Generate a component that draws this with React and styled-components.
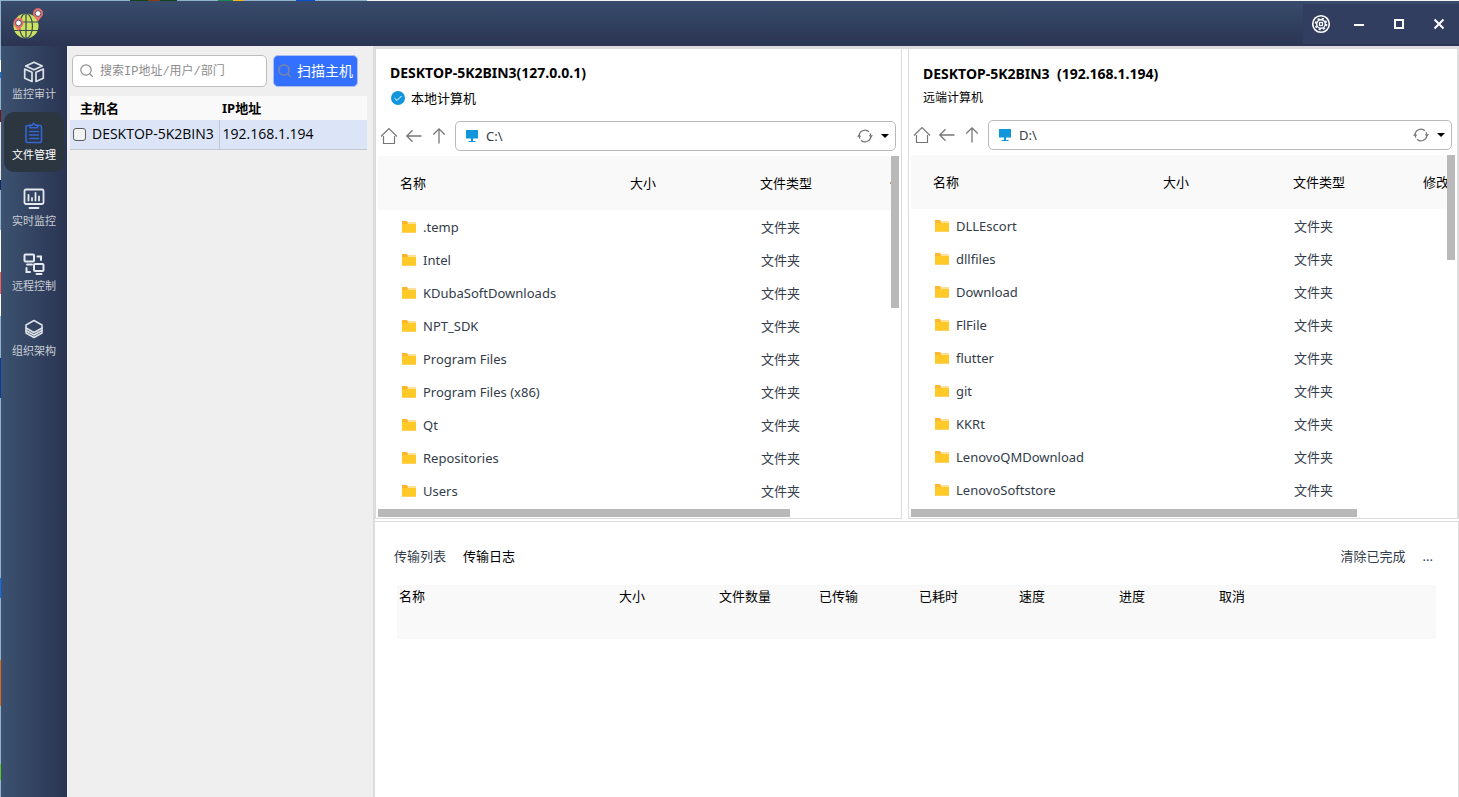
import React, { useState } from "react";
import styled, { createGlobalStyle } from "styled-components";

const latin = `"Noto Sans", "Noto Sans CJK SC", sans-serif`;

const navTop = [
  { key: "audit", label: "监控审计", Icon: CubeIcon },
  { key: "files", label: "文件管理", Icon: ClipboardIcon },
];

const navBottom = [
  { key: "live", label: "实时监控", Icon: MonitorIcon },
  { key: "remote", label: "远程控制", Icon: RemoteIcon },
  { key: "org", label: "组织架构", Icon: LayersIcon },
];

const hosts = [{ name: "DESKTOP-5K2BIN3", ip: "192.168.1.194" }];

const localFiles = [
  ".temp",
  "Intel",
  "KDubaSoftDownloads",
  "NPT_SDK",
  "Program Files",
  "Program Files (x86)",
  "Qt",
  "Repositories",
  "Users",
];

const remoteFiles = [
  "DLLEscort",
  "dllfiles",
  "Download",
  "FlFile",
  "flutter",
  "git",
  "KKRt",
  "LenovoQMDownload",
  "LenovoSoftstore",
];

const transferColumns = ["名称", "大小", "文件数量", "已传输", "已耗时", "速度", "进度", "取消"];

export default function App() {
  const [page, setPage] = useState("files");
  const [tab, setTab] = useState("log");

  const renderNav = ({ key, label, Icon }) => (
    <NavItem key={key} type="button" $active={page === key} onClick={() => setPage(key)}>
      <Icon />
      <span>{label}</span>
    </NavItem>
  );

  return (
    <>
      <GlobalStyle />
      <Desktop>
        <Window>
          <TitleBar>
            <LogoIcon />
            <WindowButtons>
              <button type="button" aria-label="设置"><GearIcon /></button>
              <button type="button" aria-label="最小化">
                <svg width="12" height="12"><path d="M1 7h10" stroke="#fff" strokeWidth="2" /></svg>
              </button>
              <button type="button" aria-label="最大化">
                <svg width="12" height="12"><path d="M2 2h8v8H2z" stroke="#fff" strokeWidth="2" fill="none" /></svg>
              </button>
              <button type="button" aria-label="关闭">
                <svg width="12" height="12"><path d="M1.5 1.5l9 9M10.5 1.5l-9 9" stroke="#fff" strokeWidth="2" /></svg>
              </button>
            </WindowButtons>
          </TitleBar>
          <Body>
            <Sidebar>
              <NavGroup $gap={1}>{navTop.map(renderNav)}</NavGroup>
              <NavGroup $gap={5}>{navBottom.map(renderNav)}</NavGroup>
            </Sidebar>
            <HostPanel>
              <SearchRow>
                <SearchBox>
                  <SearchIcon />
                  <input type="text" aria-label="搜索" placeholder="搜索IP地址/用户/部门" />
                </SearchBox>
                <ScanButton type="button">
                  <SearchIcon />
                  扫描主机
                </ScanButton>
              </SearchRow>
              <HostTable>
                <thead>
                  <tr>
                    <th>主机名</th>
                    <th>IP地址</th>
                  </tr>
                </thead>
                <tbody>
                  {hosts.map((host) => (
                    <tr key={host.ip}>
                      <td>
                        <label>
                          <input type="checkbox" />
                          {host.name}
                        </label>
                      </td>
                      <td>{host.ip}</td>
                    </tr>
                  ))}
                </tbody>
              </HostTable>
            </HostPanel>
            <Main>
              <Panes>
                <FilePane
                  title="DESKTOP-5K2BIN3(127.0.0.1)"
                  subtitle="本地计算机"
                  path="C:\"
                  files={localFiles}
                  thumbX={79}
                  thumbY={42}
                  local
                />
                <FilePane
                  title="DESKTOP-5K2BIN3  (192.168.1.194)"
                  subtitle="远端计算机"
                  path="D:\"
                  files={remoteFiles}
                  thumbX={82}
                  thumbY={29}
                />
              </Panes>
              <Transfers>
                <TransferBar>
                  <TabButton type="button" $active={tab === "list"} onClick={() => setTab("list")}>
                    传输列表
                  </TabButton>
                  <TabButton type="button" $active={tab === "log"} onClick={() => setTab("log")}>
                    传输日志
                  </TabButton>
                  <Spacer />
                  <TabButton type="button">清除已完成</TabButton>
                  <TabButton type="button">...</TabButton>
                </TransferBar>
                <TransferTable>
                  <thead>
                    <tr>
                      {transferColumns.map((name) => (
                        <th key={name}>{name}</th>
                      ))}
                    </tr>
                  </thead>
                </TransferTable>
              </Transfers>
            </Main>
          </Body>
        </Window>
      </Desktop>
    </>
  );
}

function FilePane({ title, subtitle, path, files, thumbX, thumbY, local }) {
  const [value, setValue] = useState(path);

  return (
    <Pane $local={local}>
      <PaneTitle>{title}</PaneTitle>
      <PaneSubtitle $local={local}>
        {local && <CheckIcon />}
        {subtitle}
      </PaneSubtitle>
      <PathRow>
        <IconButton type="button" aria-label="主目录"><HomeIcon /></IconButton>
        <IconButton type="button" aria-label="后退"><BackIcon /></IconButton>
        <IconButton type="button" aria-label="上一级"><UpIcon /></IconButton>
        <PathBox>
          <ScreenIcon />
          <input aria-label="路径" value={value} onChange={(e) => setValue(e.target.value)} />
          <IconButton type="button" aria-label="刷新"><RefreshIcon /></IconButton>
          <IconButton type="button" aria-label="历史路径">
            <svg width="10" height="6"><path d="M1 1h8L5 5z" fill="#000" /></svg>
          </IconButton>
        </PathBox>
      </PathRow>
      <Scroller>
        <Viewport>
          <FileTable>
            <thead>
              <tr>
                <th>名称</th>
                <th>大小</th>
                <th>文件类型</th>
                <th>修改时间</th>
              </tr>
            </thead>
            <tbody>
              {files.map((name) => (
                <tr key={name}>
                  <td>
                    <FileName>
                      <FolderIcon />
                      {name}
                    </FileName>
                  </td>
                  <td />
                  <td>文件夹</td>
                  <td />
                </tr>
              ))}
            </tbody>
          </FileTable>
        </Viewport>
        <ThumbY style={{ height: `${thumbY}%` }} />
        <ThumbX style={{ width: `${thumbX}%` }} />
      </Scroller>
    </Pane>
  );
}

function LogoIcon() {
  return (
    <svg width="34" height="34" viewBox="0 0 34 34" fill="none">
      <circle cx="15" cy="19" r="12.5" fill="#cbe35c" />
      <g stroke="#39475f" strokeWidth="1.2">
        <path d="M15 6.5v25M3 15h24M3 23.5h24" />
        <ellipse cx="15" cy="19" rx="6.5" ry="12.5" />
      </g>
      <path d="M27 14.5c-3-4-5-5.5-5-8.2a5 5 0 0 1 10 0c0 2.7-2 4.2-5 8.2z" fill="#f2716b" />
      <circle cx="27" cy="6.5" r="2.9" fill="#fff" stroke="#4a5468" />
      <path d="M7.5 24c-3-4-5-5.5-5-8.2a5 5 0 0 1 10 0c0 2.700-2 4.2-5 8.2z" fill="#f2716b" />
      <circle cx="7.5" cy="16" r="2.9" fill="#fff" stroke="#4a5468" />
    </svg>
  );
}

function GearIcon() {
  return (
    <svg width="20" height="20" viewBox="0 0 20 20" fill="none" stroke="#fff">
      <circle cx="10" cy="10" r="8.3" strokeWidth="1.6" />
      <circle cx="10" cy="10" r="4.3" strokeWidth="1.4" />
      <circle cx="10" cy="10" r="5.5" strokeWidth="1.6" strokeDasharray="2.16 2.16" />
      <rect x="8.5" y="8.5" width="3" height="3" strokeWidth="1.2" />
    </svg>
  );
}

function CubeIcon() {
  return (
    <svg width="22" height="22" viewBox="0 0 22 22" fill="none" stroke="#dfe3e8" strokeWidth="1.7" strokeLinejoin="round">
      <path d="M11 1.2l8.300 3.800L11 8.800 2.700 5z" />
      <path d="M1.700 8l7.300 3.200v9.300l-7.300-3.300z" />
      <path d="M20.300 8L13 11.200v9.300l7.300-3.300z" />
    </svg>
  );
}

function ClipboardIcon() {
  return (
    <svg width="22" height="22" viewBox="0 0 22 22" fill="none" stroke="#3566d6" strokeWidth="1.6" strokeLinecap="round">
      <path d="M7 3.500H4.500a1.500 1.500 0 0 0-1.500 1.500v14a1.500 1.500 0 0 0 1.500 1.500h12.500a1.500 1.500 0 0 0 1.500-1.500V5a1.500 1.500 0 0 0-1.500-1.500H14.500" />
      <path d="M7 3.200h2l1.700-1.700 1.700 1.700h2.100v2.500H7z" />
      <path d="M6.500 9.500h9M6.500 13h9M6.500 16.500h9" />
    </svg>
  );
}

function MonitorIcon() {
  return (
    <svg width="22" height="22" viewBox="0 0 22 22" fill="none" stroke="#e6e9ed" strokeWidth="1.8" strokeLinecap="round">
      <rect x="1.500" y="1.500" width="19" height="14.500" rx="1.500" />
      <path d="M5.500 7v5.500M9 10v2.500M12.500 5v7.500M16 8.500v4M6.500 20h9" />
    </svg>
  );
}

function RemoteIcon() {
  return (
    <svg width="22" height="22" viewBox="0 0 22 22" fill="none" stroke="#e6e9ed" strokeWidth="2" strokeLinecap="round">
      <rect x="1.500" y="1.500" width="9.500" height="7" rx="1" />
      <rect x="11" y="11" width="9.500" height="7" rx="1" />
      <path d="M4 11.500h5M13.500 21h5" />
      <path d="M14.500 3.500h3.500v3.500M3.500 15v4h3.500" />
    </svg>
  );
}

function LayersIcon() {
  return (
    <svg width="22" height="22" viewBox="0 0 22 22" fill="none" stroke="#dfe3e8" strokeWidth="1.5" strokeLinejoin="round" strokeLinecap="round">
      <path d="M11 2.500l8 4.500v3l-8 4.500L3 10V7z" />
      <path d="M3 10v2.500l8 4.500 8-4.500V10" />
      <path d="M3 12.500V15l8 4.500 8-4.500v-2.500" />
    </svg>
  );
}

function SearchIcon() {
  return (
    <svg width="14" height="14" viewBox="0 0 14 14" fill="none" stroke="#8c8c8c" strokeWidth="1.2">
      <circle cx="6" cy="6" r="5.200" />
      <path d="M9.800 9.800L12.800 12.800" />
    </svg>
  );
}

function CheckIcon() {
  return (
    <svg width="14" height="14" viewBox="0 0 14 14" fill="none">
      <circle cx="7" cy="7" r="7" fill="#1296db" />
      <path d="M3.500 7.200l2.500 2.300L10.500 5" stroke="#fff" strokeWidth="1" />
    </svg>
  );
}

function HomeIcon() {
  return (
    <svg width="18" height="18" viewBox="0 0 18 18" fill="none" stroke="#777" strokeWidth="1.2">
      <path d="M1 9.500L9 1.500l8 8" />
      <path d="M3.500 9v7.500h11V9" />
    </svg>
  );
}

function BackIcon() {
  return (
    <svg width="18" height="18" viewBox="0 0 18 18" fill="none" stroke="#777" strokeWidth="1.3">
      <path d="M16.500 9H2M7.500 3.300L1.800 9l5.700 5.700" />
    </svg>
  );
}

function UpIcon() {
  return (
    <svg width="18" height="18" viewBox="0 0 18 18" fill="none" stroke="#777" strokeWidth="1.3">
      <path d="M9 16.500V2M3.300 7.500L9 1.800l5.700 5.700" />
    </svg>
  );
}

function ScreenIcon() {
  return (
    <svg width="14" height="14" viewBox="0 0 14 14" fill="#1296db">
      <path d="M1 1h12v8.500H1zM6 9.500h2V12h2.500v1h-7v-1H6z" />
    </svg>
  );
}

function RefreshIcon() {
  return (
    <svg width="16" height="16" viewBox="0 0 16 16" fill="none" stroke="#777" strokeWidth="1.2">
      <path d="M2.200 8.500A5.800 5.800 0 0 1 12 3.800" />
      <path d="M13.800 7.500A5.800 5.800 0 0 1 4 12.200" />
      <path d="M13 5.200a5.800 5.800 0 0 1 .8 2.300M3 10.800a5.800 5.800 0 0 1-.8-2.300" />
      <path d="M0 8.800l2.200-2.800 2 2.800zM11.800 7.200l2 2.800 2.200-2.800z" fill="#777" stroke="none" />
    </svg>
  );
}

function FolderIcon() {
  return (
    <svg width="14" height="12" viewBox="0 0 14 12">
      <path d="M0 0h5l1.200 1.500H14V11.500H0z" fill="#ffb62e" />
      <path d="M5.500 1.500H14V3H6z" fill="#ffe39a" />
      <path d="M0 3h14v8.500H0z" fill="#ffca28" />
    </svg>
  );
}

const GlobalStyle = createGlobalStyle`
  * {
    box-sizing: border-box;
  }
  body {
    margin: 0;
    font-family: ${latin};
    font-size: 13px;
    line-height: 20px;
    color: #000;
  }
  button, input {
    font: inherit;
    color: inherit;
    padding: 0;
    border: none;
    outline: none;
    background: none;
  }
  button {
    cursor: pointer;
  }
  svg {
    display: block;
    flex-shrink: 0;
  }
`;

/* the wallpaper shows as a thin line above and left of the window */
const Desktop = styled.div`
  display: flex;
  min-height: 100vh;
  padding: 1px 0 0 1px;
  background:
    linear-gradient(
      to right,
      #8fb3cb 130px, #12421c 130px 148px, #8a3a14 148px 160px, #12421c 160px 177px,
      #8fb3cb 177px 218px, #1f8a4c 218px 233px, #f2b71c 233px 244px, #8fb3cb 244px 296px,
      #0a50d0 296px 315px, #8fb3cb 315px 367px, #f3f5f3 367px
    ) top / 100% 1px no-repeat,
    linear-gradient(
      #8fb3cb 60px, #fff 60px 72px, #0a7be0 72px 78px, #8fb3cb 78px 110px, #7a1018 110px 122px,
      #e8e4d8 122px 180px, #0a2a6a 180px 190px, #8fb3cb 190px 230px, #fff 230px 272px,
      #ff5a5a 272px 294px, #fff 294px 316px, #8fb3cb 316px 358px, #0a3a9a 358px 398px,
      #8fb3cb 398px 578px, #0a6ff0 578px 598px, #8fb3cb 598px 660px, #e06a10 660px 706px,
      #8fb3cb 706px 764px, #5ac81e 764px 780px, #8fb3cb 780px
    );
`;

const Window = styled.div`
  display: flex;
  flex: 1;
  min-width: 0;
  flex-direction: column;
`;

const TitleBar = styled.header`
  display: flex;
  align-items: center;
  justify-content: space-between;
  height: 45px;
  padding-left: 10px;
  background: linear-gradient(#384b6b, #2b3553);
`;

const WindowButtons = styled.div`
  display: flex;
  height: 40px;
  background: #323e5f;
  button {
    display: flex;
    align-items: center;
    justify-content: center;
    width: 40px;
    &:first-child {
      width: 36px;
    }
  }
`;

const Body = styled.div`
  display: flex;
  flex: 1;
`;

const Sidebar = styled.nav`
  display: flex;
  flex-direction: column;
  gap: 6px;
  width: 66px;
  padding: 5px 3px;
  background: linear-gradient(to right, #3c5270, #2a3453);
`;

const NavGroup = styled.div`
  display: flex;
  flex-direction: column;
  gap: ${(props) => props.$gap}px;
`;

const NavItem = styled.button`
  display: flex;
  flex-direction: column;
  align-items: center;
  justify-content: center;
  gap: 3px;
  height: 60px;
  border-radius: 10px;
  font-size: 11px;
  line-height: 16px;
  color: ${(props) => (props.$active ? "#fff" : "#c9ced4")};
  background: ${(props) => (props.$active ? "#2b3641" : "transparent")};
`;

const HostPanel = styled.aside`
  width: 306px;
  padding: 9px 6px 0 3px;
  background: #efefef;
`;

const SearchRow = styled.div`
  display: flex;
  gap: 6px;
  padding: 0 9px 9px 2px;
`;

const SearchBox = styled.label`
  display: flex;
  flex: 1;
  align-items: center;
  gap: 6px;
  height: 32px;
  padding: 0 7px;
  border: 1px solid #bdbdbd;
  border-radius: 5px;
  background: #fff;
  input {
    flex: 1;
    min-width: 0;
    padding-top: 2px;
    font-family: "Liberation Mono", "Noto Sans CJK SC", monospace;
    font-size: 12px;
    &::placeholder {
      color: #8c8c8c;
    }
  }
`;

const ScanButton = styled.button`
  display: flex;
  align-items: center;
  justify-content: center;
  gap: 5px;
  width: 85px;
  border: 1px solid #a9bdf0;
  border-radius: 5px;
  font-size: 14px;
  color: #fff;
  background: #3370ff;
`;

const HostTable = styled.table`
  width: 100%;
  border-collapse: collapse;
  table-layout: fixed;
  text-align: left;
  th {
    height: 24px;
    padding: 0 0 0 3px;
    background: #f9f9f9;
    &:first-child {
      width: 149px;
      padding-left: 10px;
    }
  }
  td {
    height: 29px;
    padding: 0 0 0 3px;
    border-bottom: 1px solid #c3c6cc;
    font-family: "Open Sans", "Noto Sans CJK SC", sans-serif;
    font-size: 14px;
    background: #dce5f8;
    white-space: nowrap;
    &:first-child {
      border-right: 1px solid #c3c6cc;
    }
  }
  label {
    display: flex;
    align-items: center;
    gap: 6px;
  }
  input {
    appearance: none;
    width: 13px;
    height: 13px;
    margin: 0;
    border: 1px solid #5c5c5c;
    border-radius: 3px;
    background: #f3f3f3;
    &:checked {
      background: #3370ff;
    }
  }
`;

const Main = styled.main`
  display: flex;
  flex: 1;
  flex-direction: column;
  min-width: 0;
  border-left: 2px solid #dcdcdc;
  background: #fff;
`;

const Panes = styled.div`
  display: grid;
  grid-template-columns: 527fr 551fr;
  gap: 6px;
  border-top: 3px solid #dcdcdc;
`;

const Pane = styled.section`
  display: flex;
  flex-direction: column;
  min-width: 0;
  padding: ${(props) => (props.$local ? "14px 2px 1px 2px" : "15px 2px 1px 2px")};
  border: 1px solid #dcdcdc;
  border-top: none;
  border-right-width: ${(props) => (props.$local ? 1 : 2)}px;
`;

const PaneTitle = styled.h2`
  margin: 0;
  padding-left: 12px;
  font-size: 14px;
  line-height: 20px;
  white-space: pre;
`;

const PaneSubtitle = styled.div`
  display: flex;
  align-items: center;
  gap: 6px;
  padding: ${(props) => (props.$local ? "5px 13px 13px" : "4px 12px 12px")};
  font-size: ${(props) => (props.$local ? 13 : 12)}px;
`;

const PathRow = styled.div`
  display: flex;
  align-items: center;
  gap: 7px;
  padding: 0 3px 5px 2px;
`;

const IconButton = styled.button`
  display: flex;
  align-items: center;
  justify-content: center;
`;

const PathBox = styled.div`
  display: flex;
  flex: 1;
  align-items: center;
  gap: 7px;
  min-width: 0;
  height: 30px;
  padding: 0 5px 0 9px;
  border: 1px solid #b9b9b9;
  border-radius: 5px;
  color: #333c4a;
  input {
    flex: 1;
    min-width: 0;
  }
`;

const Scroller = styled.div`
  position: relative;
  flex: 1;
  padding: 0 8px 10px 0;
`;

const Viewport = styled.div`
  overflow: hidden;
`;

const ThumbY = styled.div`
  position: absolute;
  top: 0;
  right: 0;
  width: 8px;
  background: #b9b9b9;
`;

const ThumbX = styled.div`
  position: absolute;
  bottom: 0;
  left: 0;
  height: 8px;
  background: #b9b9b9;
`;

const FileTable = styled.table`
  width: 660px;
  border-collapse: collapse;
  table-layout: fixed;
  text-align: left;
  th {
    width: 130px;
    height: 54px;
    padding: 0;
    font-weight: 400;
    background: #f9f9f9;
    &:first-child {
      width: 252px;
      padding-left: 22px;
    }
    &:last-child {
      width: auto;
    }
  }
  td {
    height: 33px;
    padding: 0 0 0 1px;
    color: #333c4a;
    &:first-child {
      padding-left: 24px;
    }
  }
`;

const FileName = styled.div`
  display: flex;
  align-items: center;
  gap: 7px;
`;

const Transfers = styled.section`
  flex: 1;
  margin-top: 2px;
  padding: 24px 22px 0;
  border-top: 1px solid #dcdcdc;
  border-right: 1px solid #dcdcdc;
`;

const TransferBar = styled.div`
  display: flex;
  gap: 17px;
  padding: 0 3px 19px 0;
  margin-left: -3px;
`;

const TabButton = styled.button`
  color: ${(props) => (props.$active ? "#000" : "#333c4a")};
`;

const Spacer = styled.div`
  flex: 1;
`;

const TransferTable = styled.table`
  width: 100%;
  border-collapse: collapse;
  table-layout: fixed;
  background: #f9f9f9;
  text-align: left;
  th {
    width: 100px;
    height: 54px;
    padding: 1px 2px;
    font-weight: 400;
    vertical-align: top;
    &:first-child {
      width: 220px;
    }
    &:last-child {
      width: auto;
    }
  }
`;
